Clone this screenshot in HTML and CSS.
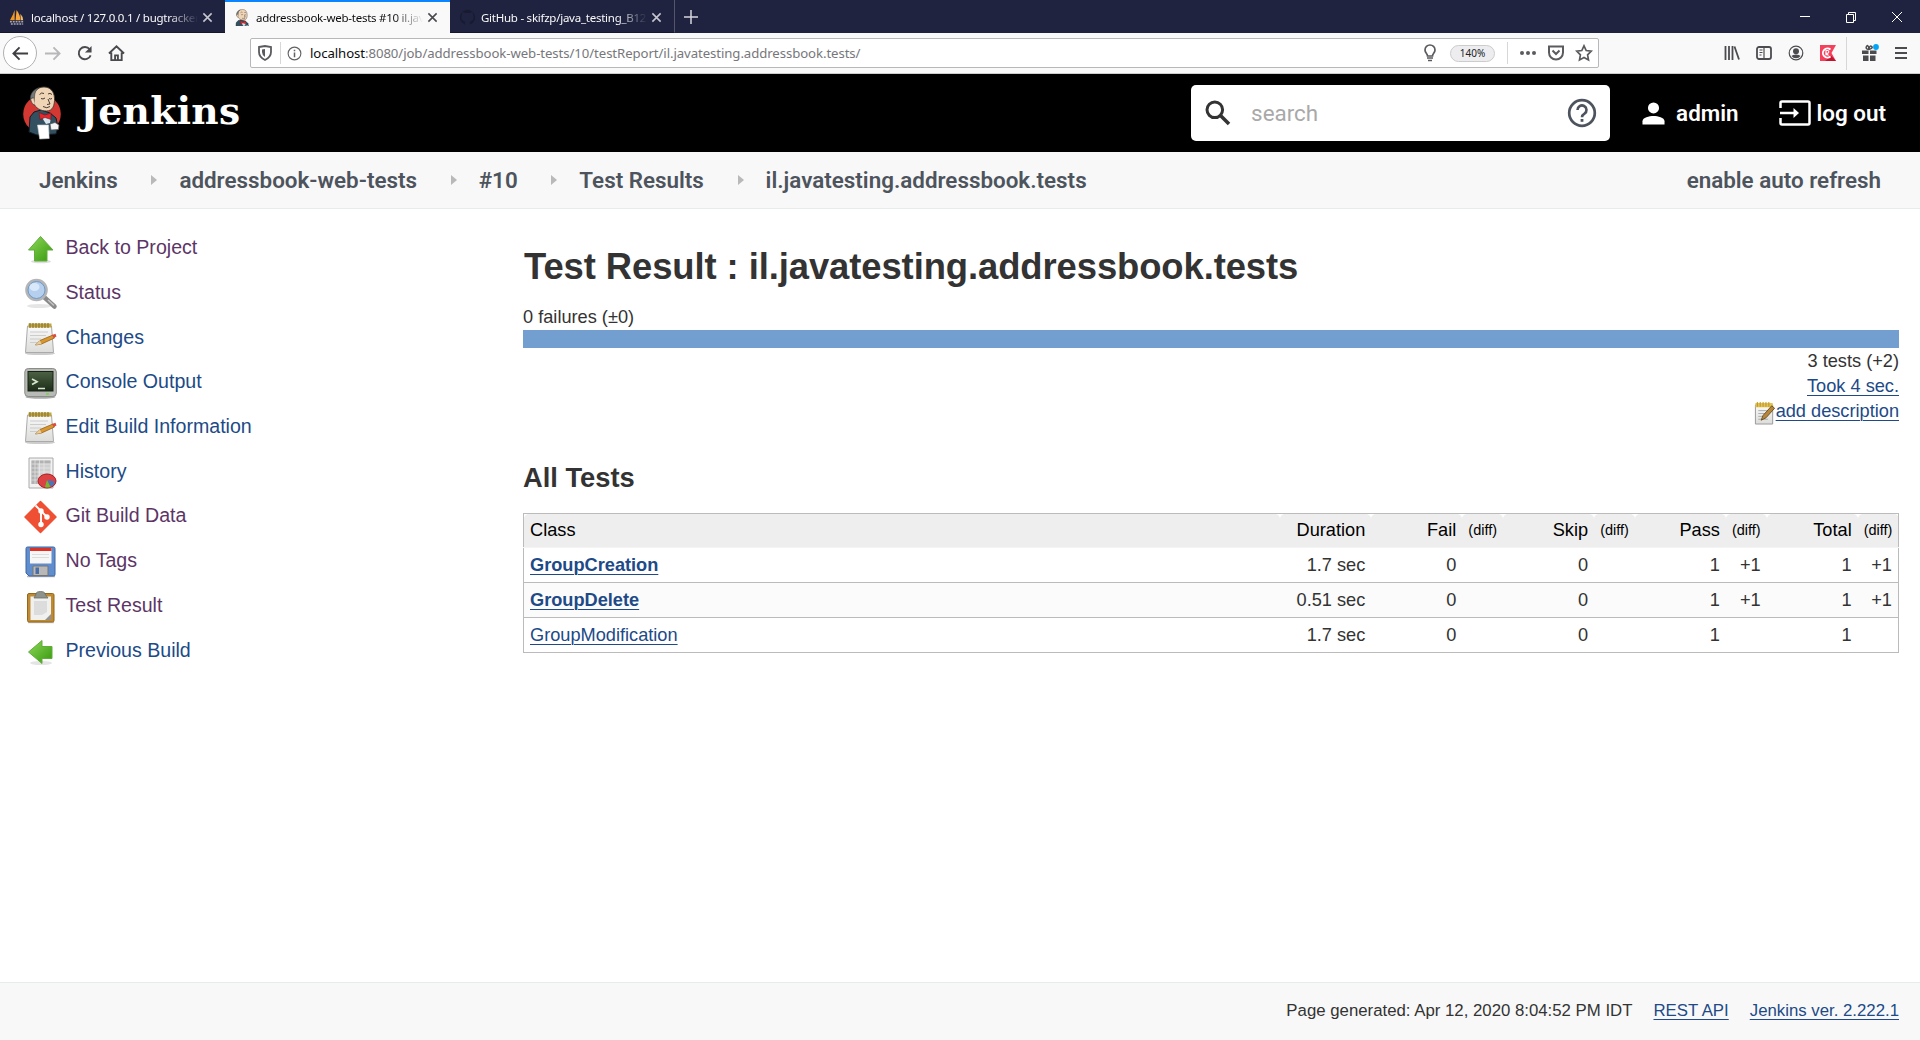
FILE: index.html
```html
<!DOCTYPE html>
<html lang="en">
<head>
<meta charset="utf-8">
<title>addressbook-web-tests #10 il.javatesting.addressbook.tests</title>
<link rel="stylesheet" href="styles.css">
</head>
<body>
<svg width="0" height="0" class="defs" aria-hidden="true">
  <defs>
    <linearGradient id="green" x1="0" y1="0" x2="1" y2="1"><stop offset="0" stop-color="#8fd85a"/><stop offset="1" stop-color="#35980c"/></linearGradient>
    <linearGradient id="paper" x1="0" y1="0" x2="0" y2="1"><stop offset="0" stop-color="#fafafa"/><stop offset="1" stop-color="#dcdcda"/></linearGradient>
    <linearGradient id="screen" x1="0" y1="0" x2="0" y2="1"><stop offset="0" stop-color="#4c6244"/><stop offset="1" stop-color="#1c2d18"/></linearGradient>
    <symbol id="notepad" viewBox="0 0 34 34">
      <ellipse cx="16" cy="31.500" rx="15" ry="1.600" fill="#ccc"/>
      <path d="M3.500 4h24l2 26.500h-28z" fill="url(#paper)" stroke="#aaa" stroke-width="1"/>
      <rect x="4.500" y="1.500" width="23" height="4" fill="#c0a544"/>
      <path d="M6 1v5M9 1v5M12 1v5M15 1v5M18 1v5M21 1v5M24 1v5" stroke="#8c772c" stroke-width="1.200"/>
      <path d="M6 10h18M6 13.500h16M6 17h11M6 20.500h7" stroke="#ccc" stroke-width="1"/>
      <path d="M11.500 23l4.500-4.500 13-5.500 1.500 3-13 6z" fill="#d9982f" stroke="#946019" stroke-width=".8"/>
      <path d="M11.500 23l4.500-4.500 1.500 3.500z" fill="#e9cf9c"/><path d="M28 13l3.500-1.200 1 2.700-3 1.500z" fill="#dc4b3e"/>
    </symbol>
    <g id="figure">
      <path d="M8 31l4-5 7-2 9 3 6 5 2 9-2 7-19 1-8-3z" fill="#335061" stroke="#111b22"/>
      <path d="M11 12C11 5 16 1 22 1c6 0 10 4 10.500 11 .3 7-1.500 13-8 13-6 0-11-3-13-8z" fill="#efd5b6" stroke="#443b34" stroke-width=".9"/>
      <path d="M8.500 14C7.500 8 12 3 17 1.800c-3 2-4.500 5-4.500 9l-.5 6z" fill="#77787a" stroke="#3c3c3e" stroke-width=".6"/>
      <path d="M11.500 12q-3.500-.5-2.500 3t3.500 4" fill="#efd5b6" stroke="#443b34" stroke-width=".8"/>
      <path d="M17.500 8.500q2-2.500 4.500-1M26 8q2-1.500 4 .5M19 12.500q2 1.200 4-.5M27 12.500q1.500 1 3 0M26 13l2 5-3 .5M21 20.500q4 2.500 7 0" fill="none" stroke="#332b28" stroke-width=".9"/>
      <path d="M19 30l6-1 4 2-1 6-4 1z" fill="#d7e6ee"/>
      <path d="M17 26.500l6 2.500 6-2v6.500l-6-2-5 2z" fill="#e3272c" stroke="#6c1518" stroke-width=".6"/>
      <path d="M15.500 39h11l.7 13.500-9.500.5z" fill="#fff" stroke="#ccc" stroke-width=".6"/>
      <path d="M28 38l5-1.500 4 2.500-.5 4.500-7.500.5z" fill="#f6f6f6" stroke="#555" stroke-width=".7"/>
    </g>
    <symbol id="close" viewBox="0 0 12 12"><path d="M1.500 1.500l9 9M10.500 1.500l-9 9" fill="none" stroke="currentColor" stroke-width="1.700"/></symbol>
  </defs>
</svg>

<header class="browser">
  <div class="tabs">
    <div class="tab">
      <svg class="fav" viewBox="0 0 18 18"><path d="M6 1v11H1Q4 7 6 1z" fill="#f0951e"/><path d="M8 1q4 5 4 11H7z" fill="#f7a63d"/><path d="M12 5q3 3 3 7h-2.500z" fill="#f7bd63"/><path d="M1 13.500h15M2 16h13" stroke="#a9a9b5" stroke-width="1.600" stroke-dasharray="2 1"/></svg>
      <span class="tab-title">localhost / 127.0.0.1 / bugtracker</span>
      <svg class="x"><use href="#close"/></svg>
    </div>
    <div class="tab active">
      <svg class="fav" viewBox="5 0 34 38"><use href="#figure"/></svg>
      <span class="tab-title">addressbook-web-tests #10 il.javatesting</span>
      <svg class="x"><use href="#close"/></svg>
    </div>
    <div class="tab">
      <svg class="fav" viewBox="0 0 18 18"><path d="M6.500 16.500v-3C2.500 12.500 2 9 3 6.500L3.500 3l3 1.200h5l3-1.200.5 3.500c1 2.500.5 6-3.500 7v3A8 8 0 1 0 6.500 16.500z" fill="#181b30"/></svg>
      <span class="tab-title">GitHub - skifzp/java_testing_B12</span>
      <svg class="x"><use href="#close"/></svg>
    </div>
    <svg class="plus" viewBox="0 0 14 14"><path d="M7 0v14M0 7h14" stroke="#d5d5dd" stroke-width="1.500"/></svg>
    <div class="window-buttons">
      <svg viewBox="0 0 12 12"><path d="M1 5.500h10" stroke="#fff"/></svg>
      <svg viewBox="0 0 12 12"><path d="M1.500 3.500h7v8h-7zM3.500 3.500v-2h7v8h-2" fill="none" stroke="#fff"/></svg>
      <svg viewBox="0 0 12 12"><path d="M1 1l10 10M11 1L1 11" stroke="#fff"/></svg>
    </div>
  </div>
  <div class="toolbar">
    <div class="nav">
      <span class="back"><svg viewBox="0 0 18 18"><path d="M17 9H2M8 2.500L1.500 9 8 15.500" fill="none" stroke="#3f3f43" stroke-width="2"/></svg></span>
      <svg class="i16" viewBox="0 0 18 18"><path d="M1 9h15M10 2.500L16.500 9 10 15.500" fill="none" stroke="#b8b8ba" stroke-width="2"/></svg>
      <svg class="i16" viewBox="0 0 18 18"><path d="M15.500 11a6.500 6.500 0 1 1-1-6.500" fill="none" stroke="#4a4a4e" stroke-width="2"/><path d="M16.500 1v7h-7z" fill="#4a4a4e"/></svg>
      <svg class="i16" viewBox="0 0 18 18"><path d="M1 9l8-7.500L17 9M3.500 8v8h11V8M7.500 16v-5h3v5" fill="none" stroke="#4a4a4e" stroke-width="2"/></svg>
    </div>
    <div class="urlbar">
      <svg class="shield" viewBox="0 0 14 16"><path d="M1 2l6-1 6 1v5q0 5-6 8-6-3-6-8z" fill="none" stroke="#5b5b5f" stroke-width="1.800"/><path d="M7 4v8q-3-2-3-5V4.500z" fill="#5b5b5f"/></svg>
      <i class="rule"></i>
      <svg class="info" viewBox="0 0 16 16"><circle cx="8" cy="8" r="6.800" fill="none" stroke="#626266" stroke-width="1.200"/><path d="M8 7v5M8 4v1.600" stroke="#626266" stroke-width="1.600"/></svg>
      <span class="url"><b>localhost</b>:8080/job/addressbook-web-tests/10/testReport/il.javatesting.addressbook.tests/</span>
      <svg class="bulb" viewBox="0 0 14 18"><path d="M4.500 12C4.500 9.500 2 9 2 6a5 5 0 0 1 10 0c0 3-2.500 3.500-2.500 6z" fill="none" stroke="#5b5b5f" stroke-width="1.700"/><path d="M4 14h6M5 16.500h4" stroke="#5b5b5f" stroke-width="1.500"/></svg>
      <span class="zoom">140%</span>
      <i class="rule"></i>
      <svg class="dots" viewBox="0 0 18 6"><g fill="#5b5b5f"><circle cx="3" cy="3" r="2"/><circle cx="9" cy="3" r="2"/><circle cx="15" cy="3" r="2"/></g></svg>
      <svg class="pocket" viewBox="0 0 18 16"><path d="M2 1.500h14v6a7 7 0 0 1-14 0z" fill="none" stroke="#5b5b5f" stroke-width="2"/><path d="M5.500 5.500L9 9l3.500-3.500" fill="none" stroke="#5b5b5f" stroke-width="2"/></svg>
      <svg class="star" viewBox="0 0 18 18"><path d="M9 1.800l2.200 4.700 5 .7-3.600 3.600.9 5.200L9 13.500 4.500 16l.9-5.200L1.800 7.200l5-.7z" fill="none" stroke="#5b5b5f" stroke-width="1.700"/></svg>
    </div>
    <div class="tools">
      <svg viewBox="0 0 16 16"><path d="M1.500 1v14M5 1v14M8.500 1v14M10.500 1.500l4.500 13" stroke="#4c4c50" stroke-width="1.800"/></svg>
      <svg viewBox="0 0 16 16"><rect x="1" y="2" width="14" height="12" rx="2" fill="none" stroke="#4c4c50" stroke-width="1.800"/><path d="M8 2v12M3.500 5h3M3.500 7.500h3M3.500 10h2" stroke="#4c4c50" stroke-width="1.200"/></svg>
      <svg viewBox="0 0 16 16"><circle cx="8" cy="8" r="6.800" fill="none" stroke="#4c4c50" stroke-width="1.200"/><circle cx="8" cy="6.200" r="3" fill="#4c4c50"/><path d="M3.500 11q1-1.500 4.500-1.500t4.500 1.500q-1.500 2.300-4.500 2.300t-4.500-2.300z" fill="#4c4c50"/></svg>
      <svg viewBox="0 0 16 16"><path d="M0 0h16l-4.500 8 4.500 8H0z" fill="#f5405c"/><path d="M5 16l6.500-5 4.500 5z" fill="#c3142f"/><path d="M10.500 4.500a4.600 4.600 0 1 0 0 7" fill="none" stroke="#fff" stroke-width="1.900"/><path d="M6 10.500v-5h1.500a1.300 1.300 0 0 1 0 2.700H6L8.500 10.500" fill="none" stroke="#fff" stroke-width="1.100"/></svg>
      <i class="rule"></i>
      <svg class="gift" viewBox="0 0 18 18"><path d="M1 6.500h6.500V10H1zM9 6.500h6.500V10H9zM2 11.500h5.500V17H2zM9 11.500h5.500V17H9z" fill="#4c4c50"/><path d="M8 5.500Q4 5 5.500 2.500T8 4.500q1-3.500 2.700-2T8 5.500" fill="none" stroke="#4c4c50" stroke-width="1.500"/><circle cx="15" cy="3" r="2.900" fill="#00a5f5"/></svg>
      <svg class="burger" viewBox="0 0 14 14"><path d="M1 2h12M1 7h12M1 12h12" stroke="#4c4c50" stroke-width="2"/></svg>
    </div>
  </div>
</header>

<div class="masthead">
  <svg class="mascot" viewBox="0 0 40 54"><circle cx="20" cy="28" r="18.800" fill="#d33833"/><use href="#figure"/></svg>
  <span class="brand">Jenkins</span>
  <div class="search">
    <svg class="magnifier" viewBox="0 0 26 26"><circle cx="9.800" cy="9.800" r="7.800" fill="none" stroke="#333" stroke-width="3"/><path d="M15 15l9 9" stroke="#333" stroke-width="3.600"/></svg>
    <span class="placeholder">search</span>
    <svg class="help" viewBox="0 0 30 30"><circle cx="15" cy="15" r="12.800" fill="none" stroke="#4d545d" stroke-width="2.700"/><path d="M10.500 12a4.500 4.500 0 1 1 7 3.700q-2.500 1.500-2.500 3.600" fill="none" stroke="#4d545d" stroke-width="2.600"/><path d="M13.600 21h2.800v2.800h-2.800z" fill="#4d545d"/></svg>
  </div>
  <a class="user"><svg viewBox="0 0 24 24"><circle cx="12" cy="6.200" r="5.800" fill="#fff"/><path d="M.5 23.500V20c0-4 7-5.500 11.500-5.500s11.500 1.500 11.500 5.500v3.500z" fill="#fff"/></svg>admin</a>
  <a class="logout"><svg viewBox="0 0 32 26"><path d="M1.500 8V3q0-1.500 1.500-1.500h26q1.500 0 1.500 1.500v20q0 1.500-1.500 1.500H3q-1.500 0-1.500-1.500v-5" fill="none" stroke="#fff" stroke-width="2.500"/><path d="M1 13h15" stroke="#fff" stroke-width="2.500"/><path d="M14.500 8l5.500 5-5.500 5z" fill="#fff"/></svg>log out</a>
</div>

<nav class="crumbs">
  <a>Jenkins</a><i></i><a>addressbook-web-tests</a><i></i><a>#10</a><i></i><a>Test Results</a><i></i><a>il.javatesting.addressbook.tests</a>
  <a class="refresh">enable auto refresh</a>
</nav>

<div class="page">
  <aside class="tasks">
    <a class="visited"><svg viewBox="0 0 34 34"><ellipse cx="17" cy="29.500" rx="10" ry="1.800" fill="#ddd"/><path d="M16.500 4.500L29 18h-6v11H10.500V18H4.500z" fill="url(#green)" stroke="#61ad3c"/></svg><span>Back to Project</span></a>
    <a class="visited"><svg viewBox="0 0 34 34"><ellipse cx="15" cy="29" rx="12" ry="2" fill="#e5e5e5"/><path d="M20 20l10.500 9.500" stroke="#8a8a8a" stroke-width="4.500" stroke-linecap="round"/><path d="M24 23l6 5.500" stroke="#c5c5c5" stroke-width="1.500"/><circle cx="12.500" cy="13" r="9.800" fill="#b5d0ef" stroke="#b4b5b7" stroke-width="3"/><circle cx="12.500" cy="13" r="8.500" fill="none" stroke="#6f9bcc"/><ellipse cx="10.500" cy="10" rx="5" ry="4" fill="#dae9f9"/></svg><span>Status</span></a>
    <a><svg><use href="#notepad"/></svg><span>Changes</span></a>
    <a><svg viewBox="0 0 34 34"><ellipse cx="16.500" cy="31" rx="15" ry="1.700" fill="#aaa"/><rect x=".8" y="2.500" width="31.500" height="28" rx="3.500" fill="#b8bab6" stroke="#8a8c88"/><rect x="4" y="5.500" width="25" height="19.500" fill="url(#screen)" stroke="#182015"/><path d="M8 13l5 2.700-5 2.700M14 22.500h7" fill="none" stroke="#d7e6ce" stroke-width="1.700"/><path d="M22 28h3" stroke="#72d83c" stroke-width="1.500"/></svg><span>Console Output</span></a>
    <a><svg><use href="#notepad"/></svg><span>Edit Build Information</span></a>
    <a><svg viewBox="0 0 34 34"><path d="M5 2h24v30H5z" fill="#f2f2f2" stroke="#aaa"/><path d="M7.500 4.500h19V28h-19z" fill="#cfcfcf"/><path d="M7.500 4.500h6V28h-6zM7.500 4.500h19v3h-19z" fill="#b2b2b2"/><path d="M11 4v24M15.500 4v24M20 4v24M7.500 8h19M7.500 12h19M7.500 16h19M7.500 20h19M7.500 24h19" stroke="#eee" stroke-width=".6"/><ellipse cx="23" cy="25" rx="9" ry="7" fill="#dc4144" stroke="#a81d22"/><path d="M23 24l8 1.500q-1 4-4 5z" fill="#4477bd"/><path d="M23 24l3.500 7q-4 1-5.500 0z" fill="#74b936"/></svg><span>History</span></a>
    <a class="visited"><svg viewBox="0 0 34 34"><path d="M16.500 1.500L32 17 16.500 32.500 1 17z" fill="#ef5034" stroke="#ef5034" stroke-width="1.500" stroke-linejoin="round"/><path d="M11.500 5.500L23 17M17 11v14" stroke="#fff" stroke-width="1.900"/><g fill="#fff"><circle cx="17" cy="11" r="2.700"/><circle cx="23" cy="17" r="2.700"/><circle cx="17" cy="24.500" r="2.700"/></g></svg><span>Git Build Data</span></a>
    <a class="visited"><svg viewBox="0 0 34 34"><path d="M3 31.500h28" stroke="#bbb" stroke-width="1.500"/><path d="M3.500 2h26q1.500 0 1.500 1.500v26q0 1.500-1.500 1.500H5l-3-3V3.500Q2 2 3.500 2z" fill="#608dcd" stroke="#3e669f"/><path d="M6 3h21.500v15.500H6z" fill="#f7f7f7"/><path d="M6 3h21.500v3H6z" fill="#df3024"/><path d="M8 9.500h17M8 12.500h17" stroke="#ddd"/><path d="M9 21h15v9.500H9z" fill="#b8b8b8" stroke="#747474"/><path d="M11.500 22.500h3.500v6.500h-3.500z" fill="#476ea6"/></svg><span>No Tags</span></a>
    <a class="visited"><svg viewBox="0 0 34 34"><path d="M4 32.700h26" stroke="#bbb"/><rect x="3.500" y="3.500" width="26.500" height="28.500" rx="1.500" fill="#bf8b32" stroke="#946719"/><path d="M6.500 6.500h20.500V30h-20.500z" fill="#f0f0ee"/><path d="M10 11h13v11l-5 3h-8z" fill="#dcdcdc"/><path d="M27 24l-6 6h6z" fill="#929292"/><path d="M10 8l2-4q0-2.500 4.500-2.500T21 4l3 4z" fill="#8d928b" stroke="#686d65" stroke-width=".8"/></svg><span>Test Result</span></a>
    <a><svg viewBox="0 0 34 34"><ellipse cx="17" cy="28" rx="11" ry="2" fill="#e4e4e4"/><path d="M4.500 17L18 5.500v6h10v12H18v5z" fill="url(#green)" stroke="#61ad3c"/></svg><span>Previous Build</span></a>
  </aside>

  <main>
    <h1>Test Result : il.javatesting.addressbook.tests</h1>
    <div class="failures">0 failures (±0)</div>
    <div class="bar"></div>
    <div class="summary">
      <span>3 tests (+2)</span>
      <a>Took 4 sec.</a>
      <span class="describe"><svg viewBox="0 0 22 24"><path d="M1 3h18v20H1z" fill="url(#paper)" stroke="#999"/><path d="M1 1h18v4.500H1z" fill="#e2c24c"/><path d="M3 0v5M6 0v5M9 0v5M12 0v5M15 0v5" stroke="#b8922a"/><path d="M4 9h12M4 12h10M4 15h8M4 18h10" stroke="#aaa"/><path d="M7 19l2-5 9-10 3 2.500-9 10z" fill="#b7863b" stroke="#69501f"/></svg><a>add description</a></span>
    </div>
    <h2>All Tests</h2>
    <table>
      <colgroup><col><col class="c-dur"><col class="c-num"><col class="c-diff"><col class="c-num"><col class="c-diff"><col class="c-num"><col class="c-diff"><col class="c-num"><col class="c-diff"></colgroup>
      <thead><tr><th>Class</th><th>Duration</th><th>Fail</th><th class="diff">(diff)</th><th>Skip</th><th class="diff">(diff)</th><th>Pass</th><th class="diff">(diff)</th><th>Total</th><th class="diff">(diff)</th></tr></thead>
      <tbody>
        <tr><td><a class="new">GroupCreation</a></td><td>1.7 sec</td><td>0</td><td></td><td>0</td><td></td><td>1</td><td>+1</td><td>1</td><td>+1</td></tr>
        <tr><td><a class="new">GroupDelete</a></td><td>0.51 sec</td><td>0</td><td></td><td>0</td><td></td><td>1</td><td>+1</td><td>1</td><td>+1</td></tr>
        <tr><td><a>GroupModification</a></td><td>1.7 sec</td><td>0</td><td></td><td>0</td><td></td><td>1</td><td></td><td>1</td><td></td></tr>
      </tbody>
    </table>
  </main>
</div>

<footer><span>Page generated: Apr 12, 2020 8:04:52 PM IDT</span><a>REST API</a><a>Jenkins ver. 2.222.1</a></footer>
</body>
</html>
```
FILE: styles.css
```css
* { box-sizing: border-box; }
body {
  margin: 0;
  height: 1040px;
  display: flex;
  flex-direction: column;
  overflow: hidden;
  background: #fff;
  color: #333;
  font: 18.2px/25px "Liberation Sans", Arial, sans-serif;
}
svg { display: block; flex: none; }
.defs { position: absolute; }

/* browser window */
.browser { font-family: "Noto Sans", "Open Sans", sans-serif; flex: none; }
.tabs { height: 33px; display: flex; align-items: center; background: #202340; color: #f9f9fa; }
.tab { width: 225px; height: 33px; padding: 2px 12px 0 9px; display: flex; align-items: center; font-size: 11.5px; border-bottom: 1px solid #15172c; }
.tab:nth-child(3) { border-right: 1px solid #54566c; }
.tab.active { background: #f9f9fa; color: #0c0c0d; border-top: 2px solid #0a84ff; border-bottom: 0; padding-top: 0; }
.fav { width: 17px; height: 17px; margin-right: 5px; }
.tab-title {
  flex: 1; min-width: 0; overflow: hidden; white-space: nowrap; letter-spacing: -0.25px;
  -webkit-mask-image: linear-gradient(to right, #000 82%, transparent);
  mask-image: linear-gradient(to right, #000 82%, transparent);
}
.x { width: 11px; height: 11px; margin-left: 4px; color: #c6c6ce; }
.active .x { color: #4a4a4e; }
.plus { width: 14px; height: 14px; margin-left: 9px; }
.window-buttons { margin-left: auto; display: flex; gap: 34px; padding-right: 17px; }
.window-buttons svg { width: 12px; height: 12px; }

.toolbar { height: 41px; display: flex; align-items: center; background: #f9f9fa; border-bottom: 1px solid #ccc; }
.nav { width: 250px; display: flex; align-items: center; padding-left: 3px; }
.back { width: 34px; height: 34px; border: 1px solid #b1b1b3; border-radius: 50%; display: grid; place-items: center; background: #fff; margin-right: 7px; }
.back svg, .i16 { width: 17px; height: 17px; }
.i16 { margin-right: 15px; }
.urlbar { width: 1349px; height: 30px; border: 1px solid #b8b8ba; border-radius: 2px; background: #fff; display: flex; align-items: center; }
.rule { width: 1px; height: 22px; background: #d7d7db; flex: none; }
.shield { width: 14px; height: 16px; margin: 0 8px 0 7px; }
.info { width: 15px; height: 15px; margin: 0 8px 0 6px; }
.url { flex: 1; font-size: 13.2px; color: #77777b; letter-spacing: -0.08px; }
.url b { font-weight: 400; color: #0c0c0d; }
.bulb { width: 14px; height: 18px; margin-right: 13px; }
.zoom { width: 45px; height: 17px; border: 1px solid #ccc; border-radius: 9px; background: #ededf0; color: #222; font-size: 10px; line-height: 15px; text-align: center; margin-right: 12px; }
.dots { width: 18px; height: 6px; margin: 0 10px 0 11px; }
.pocket { width: 18px; height: 16px; margin-right: 10px; }
.star { width: 18px; height: 18px; margin-right: 5px; }
.tools { margin-left: auto; padding-right: 12px; display: flex; align-items: center; }
.tools svg { width: 16px; height: 16px; margin-right: 16px; }
.tools .rule { height: 33px; margin: 0 14px 0 -6px; }
.tools .gift { width: 18px; height: 18px; margin-right: 15px; }
.tools .burger { width: 14px; height: 14px; margin-right: 0; }

/* page header */
.masthead { height: 78px; flex: none; background: #000; color: #fff; display: flex; align-items: center; padding: 0 34px 0 22px; }
.mascot { width: 40px; height: 54px; }
.brand { font: bold 37.6px/1 "DejaVu Serif", Georgia, serif; letter-spacing: 0.4px; margin-left: 18px; padding-bottom: 2px; }
.search { width: 419px; height: 56px; margin-left: auto; background: #fff; border-radius: 5px; display: flex; align-items: center; padding: 0 13px 0 14px; }
.magnifier { width: 26px; height: 26px; margin-right: 20px; }
.placeholder { flex: 1; font: 22.4px/1 Roboto, sans-serif; color: #a9a9a9; }
.help { width: 30px; height: 30px; }
.user, .logout { font: 600 22.4px/1 Roboto, sans-serif; display: flex; align-items: center; }
.user { margin-left: 32px; }
.user svg { width: 23px; height: 23px; margin-right: 11px; }
.logout { margin-left: 40px; }
.logout svg { width: 32px; height: 26px; margin-right: 6px; }

.crumbs { height: 57px; flex: none; background: #f8f8f8; border-bottom: 1px solid #e6ebee; display: flex; align-items: center; padding: 0 39px; font: 600 22.4px/1 Roboto, sans-serif; color: #4d545d; }
.crumbs i { border: 5px solid transparent; border-left: 6px solid #b9b9b9; border-right: 0; margin: 0 22px 0 33.7px; }
.refresh { margin-left: auto; }

/* content */
.page { flex: 1; display: flex; }
.tasks { width: 523px; padding: 18px 0 0 24px; }
.tasks a { display: flex; align-items: center; height: 44.7px; font-size: 19.6px; color: #204a87; }
.tasks .visited { color: #5c3566; }
.tasks svg { width: 34px; height: 34px; margin-right: 7.5px; }
.tasks span { padding-bottom: 3px; }
a { color: #204a87; }
.masthead a { color: #fff; }
.crumbs a { color: #4d545d; }
.summary a, td a, footer a { text-decoration: underline; text-underline-offset: 3px; text-decoration-thickness: 1px; }
main { width: 1376px; padding-top: 37px; }
h1 { margin: 0; padding-left: 1px; font-size: 36.4px; line-height: 42px; letter-spacing: -0.08px; }
h2 { margin: 38px 0 0; font-size: 27.3px; line-height: 32px; }
.failures { margin-top: 16px; line-height: 26px; }
.bar { height: 18px; background: #729fcf; }
.summary { display: flex; flex-direction: column; align-items: flex-end; margin-top: 1px; }
.describe { display: flex; align-items: center; }
.describe svg { width: 22px; height: 23px; position: relative; top: 2px; }

table { width: 1376px; margin-top: 19px; table-layout: fixed; border-collapse: collapse; border: 1px solid #bbb; background: #fff; }
.c-dur { width: 91px; }
.c-num { width: 91px; }
.c-diff { width: 40.8px; }
th, td { height: 35px; padding: 0 6px; text-align: right; font-weight: 400; white-space: nowrap; }
th { height: 34px; color: #000; background: #eee; border-radius: 5px 5px 0 0; }
.diff { font-size: 14.5px; }
th:first-child, td:first-child { text-align: left; }
td { border-top: 1px solid #bbb; }
tbody tr:first-child td { border-top-color: #f4f4f4; }
tbody tr:nth-child(2) { background: #fbfbfb; }
.new { font-weight: 700; }

footer { height: 58px; flex: none; background: #f8f8f8; border-top: 1px solid #e6ebee; display: flex; justify-content: flex-end; align-items: center; gap: 21px; padding: 0 21px 2px 0; font-size: 16.8px; }
```
